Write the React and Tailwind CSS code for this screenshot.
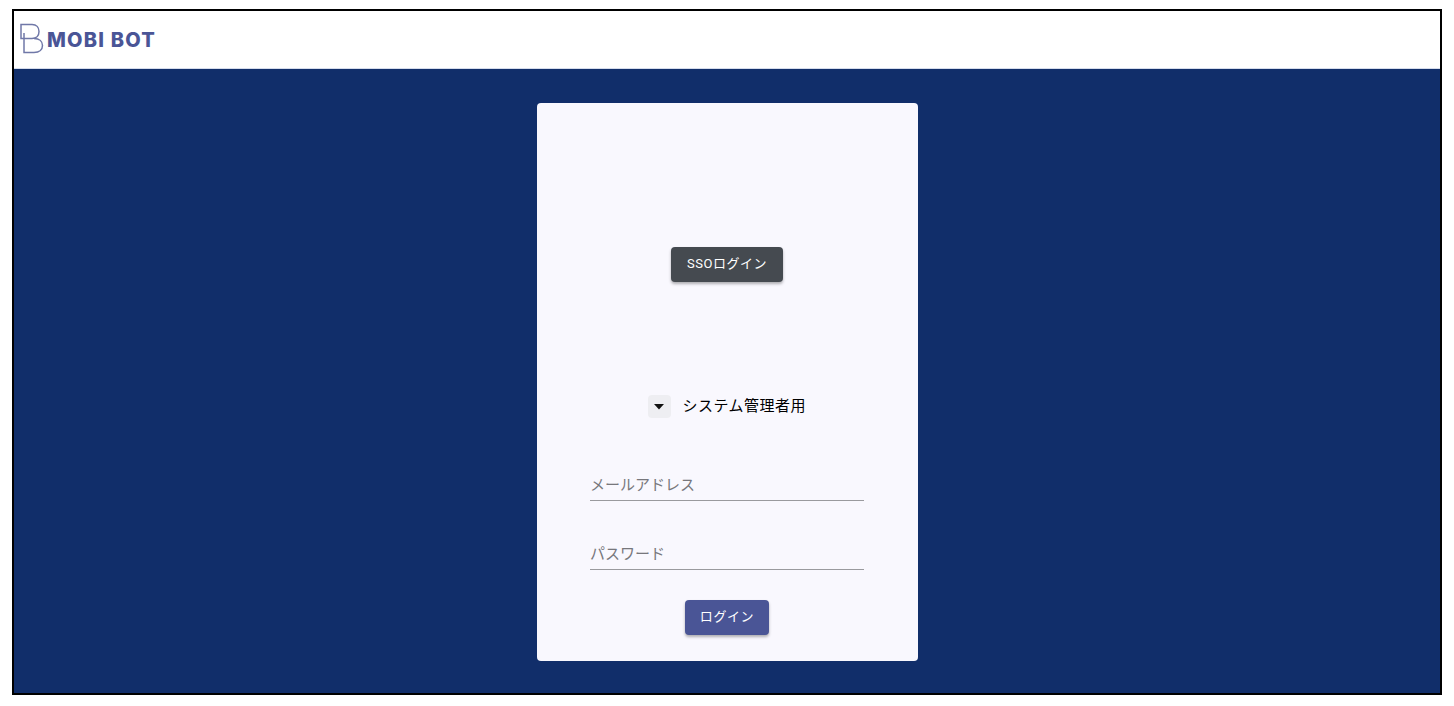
export default function App() {
  return (
    <div className="h-[706px] w-[1454px] bg-white pt-[9px] pl-[12px] font-['Roboto','Noto_Sans_CJK_JP',sans-serif]">
      <div className="flex h-[686px] w-[1430px] flex-col border-2 border-black bg-[#112e6a]">
        <header className="flex h-[58px] items-center bg-white pl-[6px] border-b border-[#d5dcec]">
          <svg width="24" height="32" viewBox="0 0 24 32" fill="none" stroke="#7078a8" strokeWidth="1.5" className="mt-[-1px]">
            <path d="M1 1.5H12C16.5 1.5 19 4.5 19 8.5C19 12.5 16.5 15.5 12 15.5H1Z" />
            <path d="M4 10V29.5H14C19.5 29.5 22.5 26.5 22.5 22.5C22.5 18.5 19.5 15.5 14 15.5" />
          </svg>
          <span className="ml-[3px] font-['Inter',sans-serif] text-[20px] leading-none font-extrabold tracking-[1.2px] text-[#4a5596]">MOBI BOT</span>
        </header>
        <main className="flex flex-1 justify-center pt-[34px]">
          <section className="flex h-[558px] w-[381px] flex-col items-center rounded-[4px] bg-[#f9f8fe] pt-[144px]">
            <button className="h-[35px] w-[112px] rounded-[4px] bg-[#454a50] pb-[2px] text-[13px] tracking-[0.55px] text-white shadow-[0_2px_3px_rgba(0,0,0,0.3)]">SSOログイン</button>
            <div className="mt-[113px] flex h-[23px] items-center self-start pl-[111px]">
              <span className="flex h-[23px] w-[23px] items-center justify-center rounded-[4px] bg-[#eeeef2]">
                <svg width="10" height="6" viewBox="0 0 10 6"><path d="M0 0H10L5 5.5Z" fill="#111" /></svg>
              </span>
              <span className="ml-[12px] text-[15px] tracking-[0.5px] text-black">システム管理者用</span>
            </div>
            <div className="mt-[52px] flex h-[31px] w-[274px] items-center border-b border-[#9a9a9e] text-[15px] text-[#77777c]">メールアドレス</div>
            <div className="mt-[38px] flex h-[31px] w-[274px] items-center border-b border-[#9a9a9e] text-[15px] text-[#77777c]">パスワード</div>
            <button className="mt-[30px] h-[35px] w-[84px] rounded-[4px] bg-[#4a5596] pb-[2px] text-[13px] tracking-[0.6px] text-white shadow-[0_2px_3px_rgba(0,0,0,0.3)]">ログイン</button>
          </section>
        </main>
      </div>
    </div>
  );
}
